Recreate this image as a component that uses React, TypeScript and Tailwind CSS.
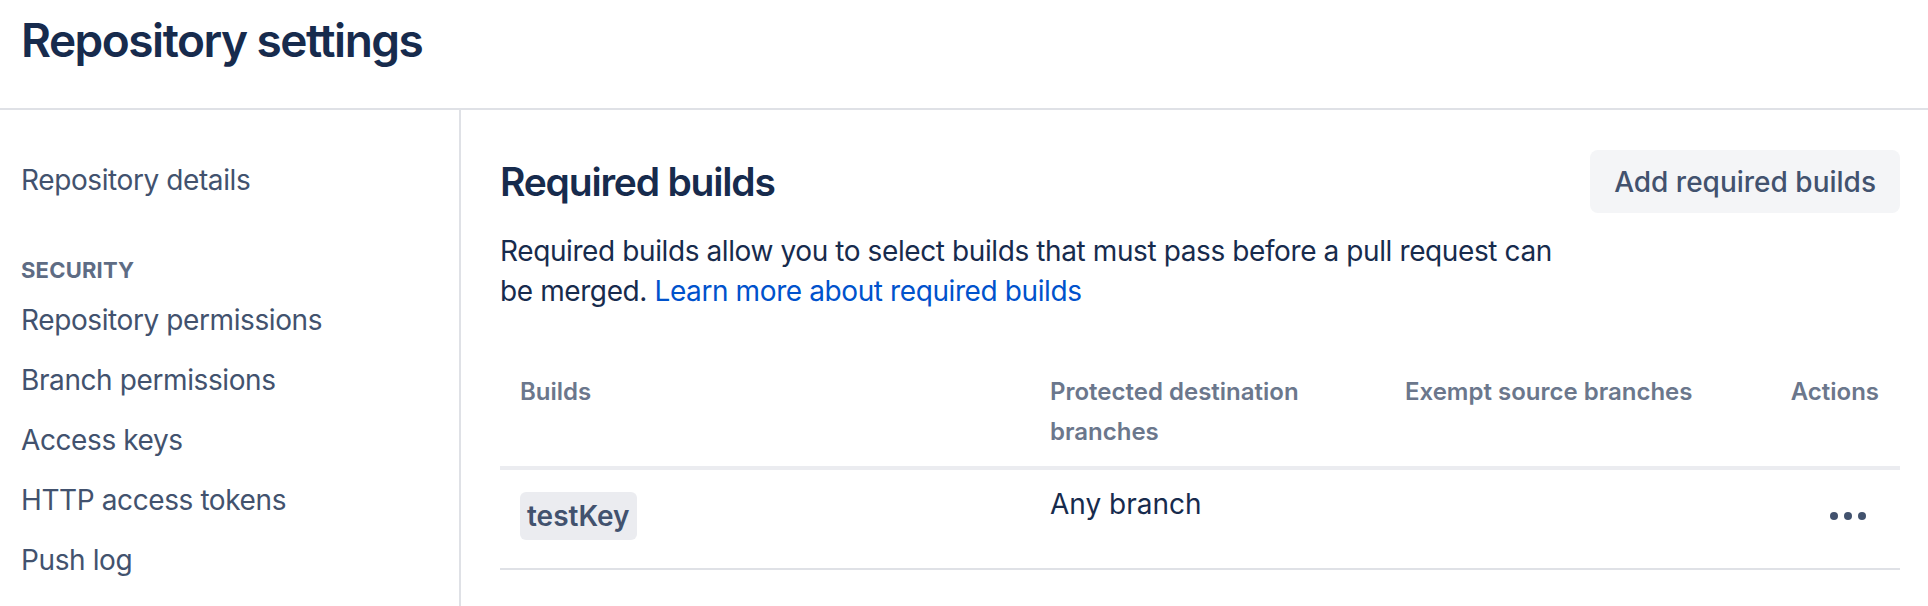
import React from 'react';

const sideItems = ['Repository permissions', 'Branch permissions', 'Access keys', 'HTTP access tokens', 'Push log'];

function MoreDots() {
  return (
    <button className="ml-auto flex h-[48px] w-[62px] items-center justify-center gap-[6px] rounded-md">
      <span className="h-[8px] w-[8px] rounded-full bg-[#42526e]" />
      <span className="h-[8px] w-[8px] rounded-full bg-[#42526e]" />
      <span className="h-[8px] w-[8px] rounded-full bg-[#42526e]" />
    </button>
  );
}

export default function App() {
  return (
    <div className="min-h-[606px] bg-white font-['Inter','Liberation_Sans',sans-serif] text-[#172b4d]">
      {/* Page header */}
      <div className="h-[110px] border-b-2 border-[#dfe1e6] pl-[21px] pt-[12px]">
        <h1 className="text-[46px] font-semibold leading-[56px] tracking-[-1.5px] text-[#172b4d]">Repository settings</h1>
      </div>

      <div className="flex">
        {/* Sidebar */}
        <nav className="min-h-[496px] w-[461px] shrink-0 border-r-2 border-[#dfe1e6] pl-[21px] pt-[50px] tracking-[-0.4px]">
          <a className="block text-[28px] leading-[40px] text-[#42526e]">Repository details</a>
          <div className="mt-[54px] text-[22px] font-bold uppercase leading-[32px] tracking-[0.2px] text-[#5e6c84]">Security</div>
          <ul className="mt-[14px] flex flex-col gap-[20px]">
            {sideItems.map((item) => (
              <li key={item} className="text-[28px] leading-[40px] text-[#42526e]">
                {item}
              </li>
            ))}
          </ul>
        </nav>

        {/* Main content */}
        <main className="flex-1 pl-[39px] pr-[28px] pt-[40px]">
          <div className="flex h-[63px] items-center justify-between">
            <h2 className="text-[39px] font-semibold leading-[48px] tracking-[-1.2px] text-[#172b4d]">Required builds</h2>
            <button className="h-[63px] rounded-[8px] bg-[#f4f5f7] px-[24px] text-[28px] font-medium text-[#42526e]">
              Add required builds
            </button>
          </div>

          <p className="mt-[18px] max-w-[1075px] text-[28px] leading-[40px] tracking-[-0.4px] text-[#172b4d]">
            Required builds allow you to select builds that must pass before a pull request can be merged.{' '}
            <a className="text-[#0052cc]">Learn more about required builds</a>
          </p>

          <table className="mt-[53px] w-full table-fixed border-collapse">
            <colgroup>
              <col className="w-[530px]" />
              <col className="w-[355px]" />
              <col className="w-[355px]" />
              <col />
            </colgroup>
            <thead>
              <tr className="border-b-4 border-[#ebecf0] text-left align-top text-[24px] font-semibold leading-[40px] text-[#6b778c]">
                <th className="px-[20px] pb-[14px] pt-[8px] font-semibold">Builds</th>
                <th className="px-[20px] pb-[14px] pt-[8px] font-semibold">Protected destination branches</th>
                <th className="px-[20px] pb-[14px] pt-[8px] font-semibold">Exempt source branches</th>
                <th className="px-[21px] pb-[14px] pt-[8px] text-right font-semibold">Actions</th>
              </tr>
            </thead>
            <tbody>
              <tr className="border-b-2 border-[#dfe1e6] align-top text-[28px] leading-[40px]">
                <td className="px-[20px] pb-[28px] pt-[22px]">
                  <span className="inline-flex h-[48px] items-center rounded-[6px] bg-[#ebecf0] px-[7px] font-semibold text-[#42526e]">
                    testKey
                  </span>
                </td>
                <td className="px-[20px] pt-[14px] text-[#172b4d]">Any branch</td>
                <td className="px-[20px] pt-[14px]" />
                <td className="pr-[21px] pt-[22px]">
                  <MoreDots />
                </td>
              </tr>
            </tbody>
          </table>
        </main>
      </div>
    </div>
  );
}
